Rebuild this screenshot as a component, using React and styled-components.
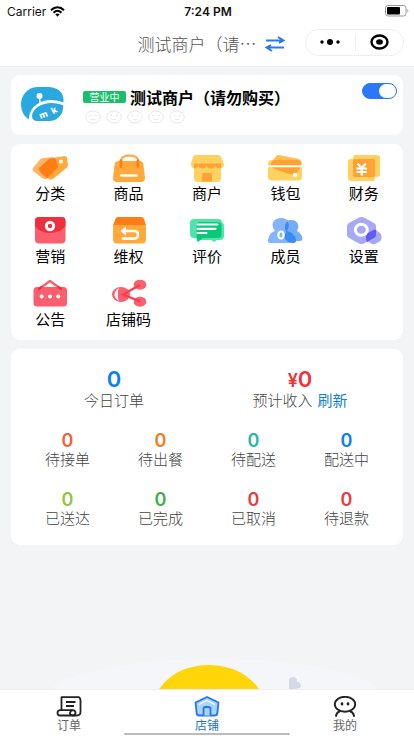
import React, { useState } from 'react';
import styled, { createGlobalStyle } from 'styled-components';

const GlobalStyle = createGlobalStyle`
  * {
    box-sizing: border-box;
  }
  body {
    margin: 0;
    background-color: #f3f4f6;
    font-family: "Noto Sans CJK SC", sans-serif;
    color: #111;
  }
  button {
    border: none;
    padding: 0;
    background: none;
    font: inherit;
    color: inherit;
    cursor: pointer;
  }
  a {
    color: inherit;
    text-decoration: none;
  }
  svg {
    display: block;
    flex-shrink: 0;
  }
`

const Page = styled.div`
  min-height: 100vh;
  display: flex;
  flex-direction: column;
`

const Header = styled.header`
  background-color: white;
  border-bottom: 1px solid #eeeeef;
`

const StatusBar = styled.div`
  display: grid;
  grid-template-columns: 1fr auto 1fr;
  align-items: center;
  height: 22px;
  padding: 0 5px 0 7px;
  font-family: Inter, sans-serif;
  font-size: 12px;
`

const Carrier = styled.div`
  display: flex;
  align-items: center;
  gap: 4px;
`

const Time = styled.div`
  font-weight: 600;
`

const BatteryBox = styled.div`
  justify-self: end;
`

const NavBar = styled.div`
  display: grid;
  grid-template-columns: 1fr auto 1fr;
  align-items: center;
  height: 44px;
  padding: 0 10px;
`

const TitleButton = styled.button`
  grid-column: 2;
  display: flex;
  align-items: center;
  gap: 8px;
  margin-left: 8px;
  font-size: 17px;
  line-height: 24px;
  font-weight: 300;
  color: #555;
`

const Capsule = styled.div`
  justify-self: end;
  display: grid;
  grid-template-columns: 1fr 1fr;
  width: 99px;
  height: 27px;
  margin-bottom: 4px;
  border: 1px solid #eee;
  border-radius: 14px;
`

const CapsuleButton = styled.button`
  display: flex;
  align-items: center;
  justify-content: center;
`

const CloseButton = styled(CapsuleButton)`
  height: 17px;
  align-self: center;
  border-left: 1px solid #eee;
`

const Main = styled.main`
  flex: 1;
  display: flex;
  flex-direction: column;
  gap: 9px;
  padding-top: 8px;
`

const Card = styled.section`
  margin: 0 11px;
  background-color: white;
  border-radius: 9px;
`

const ShopCard = styled(Card)`
  display: flex;
  align-items: flex-start;
  height: 60px;
  padding: 8px 6px 0 9px;
`

const ShopLogoBox = styled.div`
  padding-top: 3px;
`

const ShopInfo = styled.div`
  flex: 1;
  margin: 4px 0 0 19px;
`

const ShopName = styled.div`
  display: flex;
  align-items: center;
  gap: 4px;
  height: 20px;
  h1 {
    margin: 0;
    font-size: 16px;
    line-height: 20px;
    font-weight: 700;
    color: black;
    white-space: nowrap;
  }
`

const OpenBadge = styled.span`
  width: 43px;
  background-color: #19bf6b;
  border-radius: 2px;
  color: white;
  font-size: 10px;
  line-height: 12px;
  text-align: center;
`

const Faces = styled.div`
  display: flex;
  gap: 5px;
  margin: 3px 0 0 2px;
`

const Switch = styled.input`
  appearance: none;
  display: flex;
  width: 35px;
  height: 16px;
  margin: 0;
  border: 1px solid ${props => props.checked ? '#2878f8' : '#ddd'};
  border-radius: 8px;
  background-color: ${props => props.checked ? '#2878f8' : '#ddd'};
  justify-content: ${props => props.checked ? 'flex-end' : 'flex-start'};
  cursor: pointer;
  &::before {
    content: "";
    width: 17px;
    height: 14px;
    border-radius: 8px;
    background-color: white;
  }
`

const MenuCard = styled(Card)`
  display: grid;
  grid-template-columns: repeat(5, 1fr);
  row-gap: 13px;
  padding: 9px 0 11px;
`

const MenuItem = styled.button`
  display: flex;
  flex-direction: column;
  align-items: center;
  font-size: 15px;
  line-height: 20px;
  color: black;
`

const StatsCard = styled(Card)`
  padding: 18px 10px;
`

const Totals = styled.div`
  display: grid;
  grid-template-columns: 1fr 1fr;
  margin-bottom: 23px;
`

const Counts = styled.div`
  display: grid;
  grid-template-columns: repeat(4, 1fr);
  row-gap: 23px;
`

const Stat = styled.div`
  text-align: center;
`

const StatNumber = styled.div`
  font-family: Inter, sans-serif;
  font-size: ${props => props.$big ? 22 : 18}px;
  line-height: ${props => props.$big ? 24 : 18}px;
  font-weight: 600;
  color: ${props => props.$color};
  small {
    font-size: 18px;
    line-height: 18px;
  }
`

const StatLabel = styled.div`
  display: flex;
  justify-content: center;
  gap: 5px;
  font-size: 15px;
  line-height: 18px;
  font-weight: 300;
  color: #444;
`

const Refresh = styled.button`
  color: #1783c9;
  font-weight: 400;
`

const Scenery = styled.div`
  flex: 1;
  display: flex;
  align-items: flex-end;
  justify-content: center;
  overflow: hidden;
`

const TabBar = styled.nav`
  position: sticky;
  bottom: 0;
  padding: 6px 0 1px;
  background-color: white;
  border-top: 1px solid #eee;
`

const Tabs = styled.div`
  display: grid;
  grid-template-columns: repeat(3, 1fr);
`

const Tab = styled.a`
  display: flex;
  flex-direction: column;
  align-items: center;
  gap: 1px;
  font-size: 12px;
  line-height: 14px;
  color: ${props => props.$active ? '#2673cc' : '#666'};
`

const HomeIndicator = styled.div`
  width: 40%;
  height: 2px;
  margin: 1px auto 0;
  border-radius: 1px;
  background-color: #bbb;
`

const WifiIcon = () => (
  <svg width="15" height="11" viewBox="0 0 15 11" fill="none" stroke="black" strokeWidth="2">
    <path d="M1 4.2C4.8.4 10.2.4 14 4.2" />
    <path d="M3.5 6.7c2.5-2.4 5.5-2.4 8 0" />
    <path d="M5.4 8.3c1.3-1.2 2.9-1.2 4.2 0L7.5 10.8z" fill="black" stroke="none" />
  </svg>
)

const BatteryIcon = () => (
  <svg width="24" height="12" viewBox="0 0 24 12">
    <rect x=".5" y=".5" width="20.5" height="10.5" rx="2.5" fill="none" stroke="#999" />
    <rect x="2" y="2" width="13" height="7.5" rx="1" fill="black" />
    <path d="M22.3 4c1.4.6 1.4 3 0 3.6z" fill="#999" />
  </svg>
)

const SwapIcon = () => (
  <svg width="20" height="16" viewBox="0 0 20 16" fill="none" stroke="#2878f0" strokeWidth="2">
    <path d="M1 4.5h17.5M13 1l5.5 3.5L14 7M19 11.5H1.5M7 15l-5.5-3.5L6 9" />
  </svg>
)

const ShopLogo = () => (
  <svg width="44" height="36" viewBox="0 0 44 36">
    <path d="M17 1h11c9 0 15.500 5 15.500 13v8c0 8-6 13-14 13H14C5.500 34 1 26 1 18 1 9 8 1.500 17 1z" fill="#2aa9e0" />
    <path d="M9 36V31C10 21 20 14 31 14q8 0 14 3V36z" fill="white" />
    <path d="M16 35q-4-1-4-5.500C13 22 22 17 31 17q8 0 12.300 2.500 0 8-4.800 12-4 3.500-9 3.500z" fill="#2aa9e0" />
    <circle cx="19.500" cy="10" r="3" fill="white" />
    <path d="M19.500 11l.7 7" stroke="white" strokeWidth="1.300" />
    <g fill="white" fontFamily="Inter, sans-serif" fontWeight="800" fontSize="9" textAnchor="middle">
      <text x="24.500" y="31.500" transform="rotate(-20 24.500 31.500)">m</text>
      <text x="35.500" y="27" transform="rotate(-30 35.500 27)">k</text>
    </g>
  </svg>
)

const FaceIcon = () => (
  <svg width="16" height="14" viewBox="0 0 16 14" fill="none" stroke="#e6e6e6">
    <ellipse cx="8" cy="7" rx="7.300" ry="6" />
    <path d="M4 5.500h2M10 5.500h2M5.500 9c1.500 1 3.500 1 5 0" />
  </svg>
)

const menuIcons = {
  category: <>
    <path d="M1 15 9 5.500 20 4q2 0 3 2l3 8-11 11.500q-2 1-4 0L1 18q-1-1.500 0-3z" fill="#ffb365" />
    <path d="M7 15 18 5.500 33 3q2 0 2 2l1 7q0 1.500-1 2.500L21 26q-2 1-4 0-8-5-10-11z" fill="#ffa83b" />
    <path d="M7 15 17 6l6-1 3.500 8.500L15.500 25Q9 21 7 17z" fill="#ff7d14" />
    <circle cx="29" cy="8.500" r="2" fill="white" />
  </>,
  goods: <>
    <path d="M8 8h20q4 0 4.500 4l1.500 13q0 4-4 4H6q-4 0-4-4l1.500-13Q4 8 8 8z" fill="#ffa83b" />
    <path d="M10 8C10 .5 27 .5 27 8" fill="none" stroke="#ffad55" strokeWidth="2.500" />
    <path d="M10 8v5.500M27 8v5.500" stroke="#ff7d14" strokeWidth="2.800" strokeLinecap="round" />
    <path d="M10.500 22.500h15" stroke="white" strokeWidth="2.600" strokeLinecap="round" />
  </>,
  merchant: <>
    <path d="M5 10h27v15q0 4-4 4H9q-4 0-4-4z" fill="#ffd15f" />
    <path d="M7 2h22q2 0 3 2l3 7q0 4-4 4.500-4 0-5-3-1 3-4.500 3-3 0-4-3-1 3-4 3t-4.500-3q-1 3-4 3-3.500-1-3-5L4 4q1-2 3-2z" fill="#ffd15f" />
    <path d="M5 10.500h27v4.500q-4 1-6-2.500-1 3-4.500 3-3 0-4-3-1 3-4 3T9 12.500q-1 3-4 3z" fill="#ffa135" />
    <path d="M13 28.500V22q0-2 2-2h6q2 0 2 2v6.500z" fill="#ffa135" />
  </>,
  wallet: <>
    <path d="M4 10 9 3q1-1 3-1l20 4q2 1 2 3v6H4z" fill="#ffc04e" />
    <rect x="1" y="7" width="34" height="20.500" rx="4" fill="#ffd15f" />
    <path d="M4 10 6 7h25q3 0 3 4l-1 4q-2 5-8 6.500Q11 18 4 14z" fill="#ffa135" />
    <path d="M1 13.300h34" stroke="white" strokeWidth="2" />
    <circle cx="28" cy="22" r="2.200" fill="white" />
  </>,
  finance: <>
    <rect x="7" y="2" width="27" height="22" rx="3" fill="#ffd15f" />
    <rect x="2" y="6" width="27" height="22" rx="3" fill="#ffd15f" />
    <rect x="7" y="6" width="22" height="18" rx="2" fill="#ffa135" />
    <path d="M11.500 10.500l4.200 4.500 4.200-4.500M10.500 15.500h10.500M10.500 19h10.500M15.700 15v7.500" fill="none" stroke="white" strokeWidth="2.200" />
  </>,
  marketing: <>
    <rect x="3" y="1" width="30.500" height="26.500" rx="4" fill="#fb5e6c" />
    <path d="M3 10V5q0-4 4-4h22.500q4 0 4 4v5Q28 17 18 17T3 10z" fill="#ee2f3d" />
    <circle cx="18" cy="10" r="3.700" fill="none" stroke="white" strokeWidth="3" />
  </>,
  rights: <>
    <path d="M6 1h25q2 0 2 2l2 6v14q0 4.500-4 4.500H6q-4 0-4-4.500V9z" fill="#ffa83b" />
    <path d="M8 1h21q3 0 4 3l1.500 5h-32L4 4q1-3 4-3z" fill="#ff7d14" />
    <path d="M12 15h11q4 0 4 3.800t-4 3.800H12" fill="none" stroke="white" strokeWidth="2.600" strokeLinecap="round" />
    <path d="M9.500 15l5.500-4.500v9z" fill="white" />
  </>,
  review: <>
    <rect x="1" y="3" width="32" height="19" rx="4" fill="#4fe3ad" />
    <path d="M12 6h19q4 0 4 4v10q0 4-4 4h-3l-3 2-3-2H12q-4 0-4-4V10q0-4 4-4z" fill="#4fe3ad" />
    <path d="M11 6h18q3.500 0 3.500 4v8q0 4-3.500 4H14l-5 4q-1.500-1-1.500-5V10q0-4 3.500-4z" fill="#08c978" />
    <path d="M8.500 8.500h20M8.500 12.800h18M8.500 17h9" stroke="white" strokeWidth="2.200" strokeLinecap="round" />
  </>,
  member: <>
    <path d="M24 4c7 0 9 6 6 11 4 2 5.500 6 5.500 8q0 2-2.500 2H16V10c1-4 4-6 8-6z" fill="#73adf8" />
    <path d="M14 2c8 0 11 7 6.500 13 6 1 8.500 5 8.500 10q0 2-3 2H3q-2.500 0-2-3c1-5 3-8 7-9C3 9 6 2 14 2z" fill="#82b6f9" />
    <path d="M20.500 5q3 5-.5 10 7 1 9 8v2q-1 2-3 2-8-1-9-7l2-4q-3-6 1.500-11z" fill="#3e8af4" />
    <ellipse cx="14" cy="19" rx="2.700" ry="3.500" fill="none" stroke="white" strokeWidth="2.200" />
  </>,
  setting: <>
    <path d="M13 1.500q2.500-1 5 0L28 7q2 1 2 3v9q0 2-2 3l-10 5.500q-2.500 1-5 0L3 22q-2-1-2-3v-9q0-2 2-3z" fill="#a7a9f6" />
    <path d="M27 14q1.500-1 3 0l4 3q1.500 1 1.500 3v2.500q0 2-2 3L29 28q-1.500.5-3 0l-4-2.500q-2-1-2-3V20q0-2 2-3z" fill="#a7a9f6" />
    <path d="M26.500 14.500q2-1.500 3.500-.5v5q0 2-2 3l-7 4q-1-1-1-3v-3q0-2 2-3z" fill="#635cf1" />
    <ellipse cx="15.300" cy="13.800" rx="6" ry="5.500" fill="none" stroke="white" strokeWidth="3" />
  </>,
  notice: <>
    <rect x="1.500" y="8" width="33.500" height="19.500" rx="3.500" fill="#fb5e6c" />
    <path d="M7.500 9.500 18 2l10.500 7.500" fill="none" stroke="#fb5e6c" strokeWidth="2.200" strokeLinejoin="round" />
    <path d="M7 10l2.500-1.800M29 10l-2.500-1.800" stroke="#ee2f3d" strokeWidth="2.200" strokeLinecap="round" />
    <g fill="white">
      <circle cx="9.700" cy="17.500" r="2" />
      <circle cx="18" cy="17.500" r="2" />
      <circle cx="26.300" cy="17.500" r="2" />
    </g>
  </>,
  code: <>
    <ellipse cx="10" cy="15.500" rx="9" ry="7.500" fill="#fb5e6c" />
    <path d="M6.500 11q-4.500 4.500 0 9-1-4.500 0-9z" fill="white" stroke="white" strokeWidth="1.500" />
    <ellipse cx="29" cy="5.800" rx="6.300" ry="5" fill="#fb5e6c" />
    <ellipse cx="29" cy="22.800" rx="6.300" ry="5" fill="#fb5e6c" />
    <path d="M28 6.500 12 15.500 28 22" fill="none" stroke="#f4404d" strokeWidth="2.400" strokeLinejoin="round" strokeLinecap="round" />
  </>,
}

const menus = [
  { icon: 'category', label: '分类' },
  { icon: 'goods', label: '商品' },
  { icon: 'merchant', label: '商户' },
  { icon: 'wallet', label: '钱包' },
  { icon: 'finance', label: '财务' },
  { icon: 'marketing', label: '营销' },
  { icon: 'rights', label: '维权' },
  { icon: 'review', label: '评价' },
  { icon: 'member', label: '成员' },
  { icon: 'setting', label: '设置' },
  { icon: 'notice', label: '公告' },
  { icon: 'code', label: '店铺码' },
]

const counts = [
  { label: '待接单', color: '#ec5f41' },
  { label: '待出餐', color: '#ee7d20' },
  { label: '待配送', color: '#25b5ae' },
  { label: '配送中', color: '#087ef0' },
  { label: '已送达', color: '#91c546' },
  { label: '已完成', color: '#3bb04b' },
  { label: '已取消', color: '#e63c3c' },
  { label: '待退款', color: '#e63c3c' },
]

const tabs = [
  {
    label: '订单',
    icon: <g fill="none" stroke="#222" strokeWidth="1.800" strokeLinejoin="round">
      <path d="M4.500 14V1.200h17.500q1.500 1 1.500 3V16q0 3.500-4 3.500H3q-2.500 0-2.500-2.500T3 14.200h12.500" />
      <path d="M15.500 14.200q3 0 3 2.600t-3 2.700q-3-1-2.500-2.800t2.500-2.500zM9 6h9.500M9 10h8" />
    </g>
  },
  {
    label: '店铺',
    active: true,
    icon: <g fill="#a9d4fb" stroke="#2474ee" strokeWidth="1.800" strokeLinejoin="round">
      <path d="M12 1 23.500 6.500 22.300 17.500q-.3 2-2.500 2H4.200q-2.200 0-2.500-2L.5 6.500z" />
      <path d="M8.500 19.500V13q0-2 2-2h3q2 0 2 2v6.500" />
      <path d="M4 8.500 12 4.500l8 4" fill="none" stroke="white" strokeWidth="1.200" />
    </g>
  },
  {
    label: '我的',
    icon: <g fill="none" stroke="#222" strokeWidth="1.900" strokeLinecap="round">
      <ellipse cx="12" cy="8.300" rx="10.200" ry="7.500" />
      <path d="M6.500 15.500q-3 1-3.500 4.500M17.500 15.500q3 1 3.500 4.500" />
      <path d="M9 7.500v.8M15 7.500v.8" strokeWidth="2.600" />
    </g>
  },
]

const App = () => {
  const [open, setOpen] = useState(true)
  return (<Page lang="zh-CN">
    <GlobalStyle />
    <Header>
      <StatusBar>
        <Carrier>Carrier <WifiIcon /></Carrier>
        <Time>7:24 PM</Time>
        <BatteryBox><BatteryIcon /></BatteryBox>
      </StatusBar>
      <NavBar>
        <TitleButton>测试商户（请… <SwapIcon /></TitleButton>
        <Capsule>
          <CapsuleButton aria-label="更多">
            <svg width="20" height="8" viewBox="0 0 20 8">
              <circle cx="2" cy="4" r="1.700" />
              <circle cx="10" cy="4" r="3" />
              <circle cx="18" cy="4" r="1.700" />
            </svg>
          </CapsuleButton>
          <CloseButton aria-label="关闭">
            <svg width="19" height="16" viewBox="0 0 19 16">
              <ellipse cx="9.500" cy="8" rx="8" ry="6.500" fill="none" stroke="black" strokeWidth="2.400" />
              <ellipse cx="9.500" cy="8" rx="3.400" ry="2.800" />
            </svg>
          </CloseButton>
        </Capsule>
      </NavBar>
    </Header>
    <Main>
      <ShopCard>
        <ShopLogoBox><ShopLogo /></ShopLogoBox>
        <ShopInfo>
          <ShopName>
            <OpenBadge>营业中</OpenBadge>
            <h1>测试商户（请勿购买）</h1>
          </ShopName>
          <Faces>
            {[1, 2, 3, 4, 5].map(score => <FaceIcon key={score} />)}
          </Faces>
        </ShopInfo>
        <Switch
          type="checkbox"
          aria-label="营业状态"
          checked={open}
          onChange={e => setOpen(e.target.checked)}
        />
      </ShopCard>
      <MenuCard>
        {menus.map(item => <MenuItem key={item.icon}>
          <svg width="36" height="30" viewBox="0 0 36 30">{menuIcons[item.icon]}</svg>
          {item.label}
        </MenuItem>)}
      </MenuCard>
      <StatsCard>
        <Totals>
          <Stat>
            <StatNumber $big $color="#087ef0">0</StatNumber>
            <StatLabel>今日订单</StatLabel>
          </Stat>
          <Stat>
            <StatNumber $big $color="#ee3438"><small>¥</small>0</StatNumber>
            <StatLabel>预计收入 <Refresh>刷新</Refresh></StatLabel>
          </Stat>
        </Totals>
        <Counts>
          {counts.map(item => <Stat key={item.label}>
            <StatNumber $color={item.color}>0</StatNumber>
            <StatLabel>{item.label}</StatLabel>
          </Stat>)}
        </Counts>
      </StatsCard>
      <Scenery>
        <svg width="414" height="36" viewBox="0 0 414 36">
          <ellipse cx="215" cy="46" rx="170" ry="40" fill="#f5f6fa" />
          <ellipse cx="209" cy="56" rx="56" ry="44" fill="#ffd60a" />
          <path d="M289 36V28q0-4 4-4t4 4v1q4 0 4 3.500T297 35v1z" fill="#d5d8e6" />
        </svg>
      </Scenery>
    </Main>
    <TabBar>
      <Tabs>
        {tabs.map(tab => <Tab key={tab.label} href="#" $active={tab.active}>
          <svg width="26" height="21" viewBox="-1 0 26 21">{tab.icon}</svg>
          {tab.label}
        </Tab>)}
      </Tabs>
      <HomeIndicator />
    </TabBar>
  </Page>
  );
}

export default App;
